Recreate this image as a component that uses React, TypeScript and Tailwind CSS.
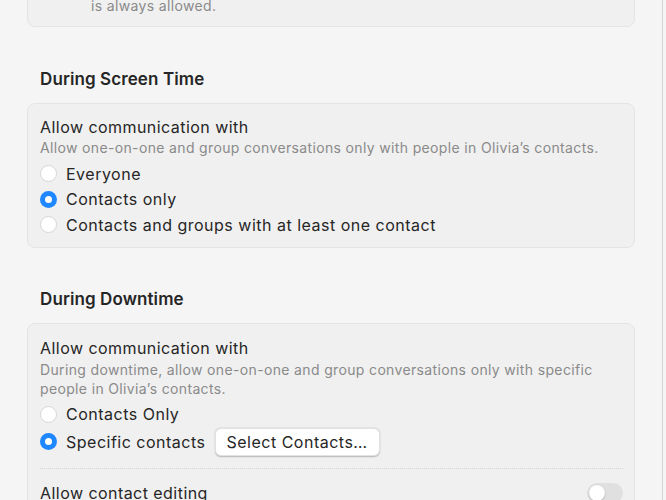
import { useState } from "react";

const font = { fontFamily: "Inter, 'Noto Sans', sans-serif" };

function Radio({ checked }: { checked: boolean }) {
  return checked ? (
    <span className="w-[17px] h-[17px] rounded-full bg-[#1f87ff] flex items-center justify-center shrink-0">
      <span className="w-[7px] h-[7px] rounded-full bg-white" />
    </span>
  ) : (
    <span className="w-[17px] h-[17px] rounded-full bg-white border border-[#d6d6d6] shrink-0" />
  );
}

function Option({ label, checked, onClick, children }: { label: string; checked: boolean; onClick: () => void; children?: React.ReactNode }) {
  return (
    <div className="flex items-center gap-[9px] cursor-default" onClick={onClick}>
      <Radio checked={checked} />
      <span className="text-[16px] tracking-[0.5px] text-[#262626]">{label}</span>
      {children}
    </div>
  );
}

export default function App() {
  const [screenTime, setScreenTime] = useState(1);
  const [downtime, setDowntime] = useState(1);
  const [editing, setEditing] = useState(false);

  return (
    <div className="w-[666px] h-[500px] overflow-hidden bg-[#f5f5f5] flex" style={font}>
      <div className="w-[663px] border-r border-[#d4d4d4] px-[27px]">
        {/* previous card, mostly scrolled off */}
        <div className="-mt-[20px] h-[47px] rounded-[8px] bg-[#f0f0f0] border border-[#e4e4e4] pl-[63px] flex items-end pb-[11px]">
          <span className="text-[14px] leading-[18px] tracking-[0.35px] text-[#8a8a8a]">is always allowed.</span>
        </div>

        {/* During Screen Time */}
        <h2 className="mt-[41px] px-[13px] text-[17px] leading-[22px] font-semibold tracking-[0.1px] text-[#262626]">During Screen Time</h2>
        <div className="mt-[13px] rounded-[8px] bg-[#f0f0f0] border border-[#e4e4e4] px-[12px] pt-[13px] pb-[9px]">
          <div className="text-[16px] leading-[20px] tracking-[0.45px] text-[#262626]">Allow communication with</div>
          <div className="mt-[2px] text-[14px] leading-[18px] tracking-[0.35px] text-[#8a8a8a]">
            Allow one-on-one and group conversations only with people in Olivia’s contacts.
          </div>
          <div className="mt-[4px] flex flex-col">
            {["Everyone", "Contacts only", "Contacts and groups with at least one contact"].map((l, i) => (
              <div key={l} className="h-[25.5px] flex items-center">
                <Option label={l} checked={screenTime === i} onClick={() => setScreenTime(i)} />
              </div>
            ))}
          </div>
        </div>

        {/* During Downtime */}
        <h2 className="mt-[40px] px-[13px] text-[17px] leading-[22px] font-semibold tracking-[0.1px] text-[#262626]">During Downtime</h2>
        <div className="mt-[13px] rounded-[8px] bg-[#f0f0f0] border border-[#e4e4e4] pl-[12px] pr-[11px] pt-[14px]">
          <div className="text-[16px] leading-[20px] tracking-[0.45px] text-[#262626]">Allow communication with</div>
          <div className="mt-[2px] text-[14px] leading-[19px] tracking-[0.35px] text-[#8a8a8a]">
            During downtime, allow one-on-one and group conversations only with specific people in Olivia’s contacts.
          </div>
          <div className="mt-[4px] h-[25px] flex items-center">
            <Option label="Contacts Only" checked={downtime === 0} onClick={() => setDowntime(0)} />
          </div>
          <div className="mt-[1px] h-[28px] flex items-center">
            <Option label="Specific contacts" checked={downtime === 1} onClick={() => setDowntime(1)}>
              <button className="h-[28px] px-[11px] rounded-[6px] bg-white text-[16px] tracking-[0.5px] text-[#262626] shadow-[0_0.5px_1.5px_rgba(0,0,0,0.25)] border border-[#e2e2e2]">
                Select Contacts…
              </button>
            </Option>
          </div>
          <div className="mt-[12px] border-t border-dotted border-[#d6d6d6]" />
          <div className="flex items-start justify-between pt-[14px] pb-[14px]">
            <span className="text-[16px] leading-[20px] tracking-[0.45px] text-[#262626]">Allow contact editing</span>
            <button
              onClick={() => setEditing(!editing)}
              className={`w-[36px] h-[20px] rounded-full p-[2px] flex ${editing ? "bg-[#1f87ff] justify-end" : "bg-[#e0e0e0] justify-start"}`}
            >
              <span className="w-[16px] h-[16px] rounded-full bg-white shadow-[0_0.5px_1.5px_rgba(0,0,0,0.3)]" />
            </button>
          </div>
        </div>
      </div>
    </div>
  );
}
